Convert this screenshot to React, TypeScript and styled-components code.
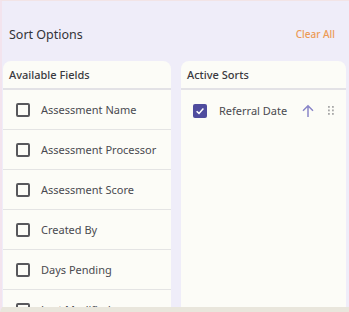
import React from "react";
import styled, { createGlobalStyle } from "styled-components";

const Global = createGlobalStyle`
  html, body { margin: 0; padding: 0; background: #efedf9; }
  body { font-family: "Noto Sans", "Open Sans", sans-serif; overflow: hidden; }
  * { box-sizing: border-box; }
`;

const Page = styled.div`
  width: 349px;
  height: 312px;
  background: #efedf9;
  border-top: 1px solid #f2e4e6;
  border-left: 2px solid #f3e4ee;
  border-bottom: 5px solid #e9e6dc;
  display: flex;
  flex-direction: column;
  overflow: hidden;
`;

const Header = styled.div`
  display: flex;
  align-items: center;
  justify-content: space-between;
  height: 60px;
  flex-shrink: 0;
  padding: 6px 14px 0 7px;
`;

const Title = styled.h1`
  margin: 0;
  font-size: 12.5px;
  font-weight: 400;
  color: #333338;
`;

const ClearAll = styled.button`
  border: none;
  background: none;
  padding: 0;
  font-family: inherit;
  font-size: 10px;
  font-weight: 500;
  color: #ec9a55;
  cursor: pointer;
`;

const Columns = styled.div`
  flex: 1;
  display: grid;
  grid-template-columns: 168px 165px;
  column-gap: 10px;
  padding-left: 1px;
  min-height: 0;
`;

const Panel = styled.section`
  background: #fcfcf7;
  border-radius: 8px 8px 0 0;
  display: flex;
  flex-direction: column;
  overflow: hidden;
  min-height: 0;
`;

const PanelHeader = styled.div`
  flex: 0 0 29px;
  padding: 0 6px;
  display: flex;
  align-items: center;
  border-bottom: 2px solid #e3e2e6;
  font-size: 11px;
  font-weight: 500;
  color: #3a3a40;
`;

const FieldRow = styled.label`
  flex: 0 0 40px;
  display: flex;
  align-items: center;
  gap: 11px;
  padding-left: 13px;
  border-bottom: 1px solid #e4e4e4;
  font-size: 11px;
  color: #4a4a50;
`;

const Box = styled.span<{ $checked?: boolean }>`
  width: 14px;
  height: 14px;
  flex: 0 0 14px;
  border-radius: 2px;
  border: ${(p) => (p.$checked ? "none" : "2px solid #58585c")};
  background: ${(p) => (p.$checked ? "#4f4c9e" : "transparent")};
  display: flex;
  align-items: center;
  justify-content: center;
`;

const SortRow = styled.div`
  flex: 0 0 39px;
  display: flex;
  align-items: center;
  padding: 0 12px;
  font-size: 11px;
  color: #4a4a50;
  margin-top: 1px;
`;

const SortLabel = styled.span`
  margin-left: 12px;
  flex: 1;
`;

const IconBtn = styled.span<{ $gap?: number }>`
  display: flex;
  align-items: center;
  margin-left: ${(p) => p.$gap ?? 0}px;
`;

const fields = [
  "Assessment Name",
  "Assessment Processor",
  "Assessment Score",
  "Created By",
  "Days Pending",
  "Last Modified",
];

export default function App() {
  return (
    <>
      <Global />
      <Page>
        <Header>
          <Title>Sort Options</Title>
          <ClearAll>Clear All</ClearAll>
        </Header>
        <Columns>
          <Panel>
            <PanelHeader>Available Fields</PanelHeader>
            {fields.map((f) => (
              <FieldRow key={f}>
                <Box />
                <span>{f}</span>
              </FieldRow>
            ))}
          </Panel>
          <Panel>
            <PanelHeader>Active Sorts</PanelHeader>
            <SortRow>
              <Box $checked>
                <svg width="10" height="10" viewBox="0 0 10 10">
                  <path d="M1.6 5.2 L4 7.4 L8.4 2.6" fill="none" stroke="#fff" strokeWidth="1.5" />
                </svg>
              </Box>
              <SortLabel>Referral Date</SortLabel>
              <IconBtn>
                <svg width="14" height="14" viewBox="0 0 14 14">
                  <path d="M7 13 V2 M2 6.8 L7 1.8 L12 6.8" fill="none" stroke="#8a86c8" strokeWidth="1.5" />
                </svg>
              </IconBtn>
              <IconBtn $gap={13}>
                <svg width="6" height="9" viewBox="0 0 6 9">
                  {[0, 1, 2].map((r) =>
                    [0, 1].map((c) => (
                      <rect key={`${r}${c}`} x={c * 4} y={r * 3.5} width="1.8" height="1.8" fill="#a8a8a8" />
                    ))
                  )}
                </svg>
              </IconBtn>
            </SortRow>
          </Panel>
        </Columns>
      </Page>
    </>
  );
}
